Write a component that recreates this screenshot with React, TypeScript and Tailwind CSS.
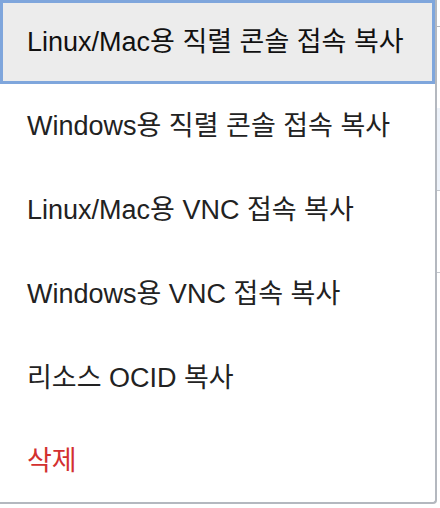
import React from "react";

const items = [
  "Linux/Mac용 직렬 콘솔 접속 복사",
  "Windows용 직렬 콘솔 접속 복사",
  "Linux/Mac용 VNC 접속 복사",
  "Windows용 VNC 접속 복사",
  "리소스 OCID 복사",
];

export default function App() {
  return (
    <div
      className="relative w-[440px] h-[508px] bg-white overflow-hidden"
      style={{ fontFamily: '"Liberation Sans", "Noto Sans CJK KR", sans-serif' }}
    >
      {/* background content peeking out at the right edge */}
      <div className="absolute left-[437px] top-[26px] w-[3px] h-[1px] bg-[#b4b8bf]" />
      <div className="absolute left-[437px] top-[108px] w-[3px] h-[82px] bg-[#eef3fa]" />
      <div className="absolute left-[437px] top-[190px] w-[3px] h-[1px] bg-[#c3c7cd]" />
      <div className="absolute left-[437px] top-[272px] w-[3px] h-[1px] bg-[#c3c7cd]" />

      <div className="absolute left-0 top-0 w-[437px] flex flex-col bg-white border-r-2 border-b-2 border-[#b4b8bf] rounded-br-[4px]">
        {items.map((t, i) => (
          <div
            key={t}
            className={
              i === 0
                ? "h-[84px] flex items-center pl-[24px] bg-[#ececec] border-[3px] border-[#7fa6dc] text-[27px] text-[#111]"
                : "h-[84px] flex items-center pl-[27px] text-[27px] text-[#222]"
            }
          >
            {t}
          </div>
        ))}
        <div className="h-[82px] flex items-center pl-[27px] text-[27px] text-[#d3302f]">
          삭제
        </div>
      </div>
    </div>
  );
}
